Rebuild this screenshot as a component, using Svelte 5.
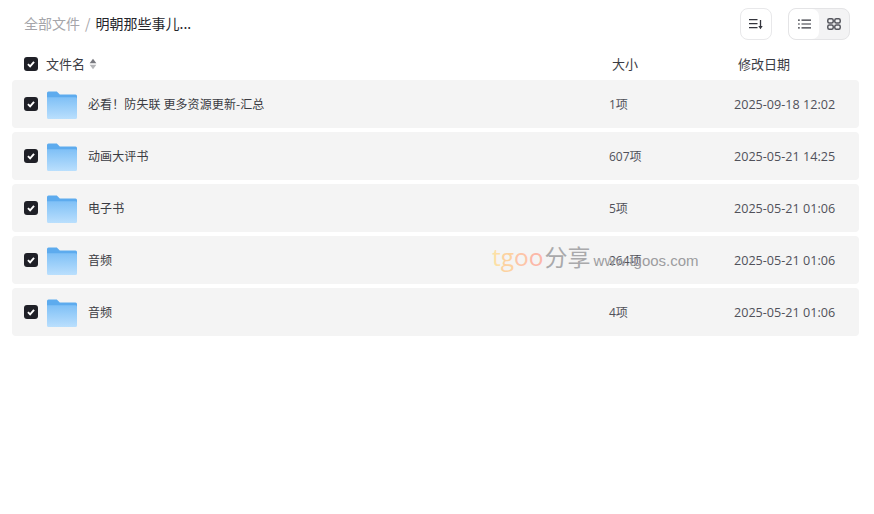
<script>
  const rows = [
    { name: "必看！防失联 更多资源更新-汇总", size: "1项", date: "2025-09-18 12:02" },
    { name: "动画大评书", size: "607项", date: "2025-05-21 14:25" },
    { name: "电子书", size: "5项", date: "2025-05-21 01:06" },
    { name: "音频", size: "264项", date: "2025-05-21 01:06" },
    { name: "音频", size: "4项", date: "2025-05-21 01:06" },
  ];
</script>

{#snippet check()}
  <span class="check">
    <svg width="8" height="8" viewBox="0 0 10 10"><path d="M1.2 5.2 3.9 8 8.8 2.2" fill="none" stroke="#fff" stroke-width="2.4" /></svg>
  </span>
{/snippet}

<div class="page">
  <header class="top">
    <nav class="crumbs">
      <span class="root">全部文件</span>
      <span class="sep">/</span>
      <span class="current">明朝那些事儿...</span>
    </nav>
    <div class="tools">
      <button class="tool-btn" aria-label="排序">
        <svg width="14" height="12" viewBox="0 0 14 12" fill="none" stroke="#33343c" stroke-width="1.3">
          <path d="M0 1.7H8.5M0 5.7H8.5M0 9.7H8.5" />
          <path d="M11.5 2V9" />
          <path d="M9.3 8 11.5 11.2 13.7 8Z" fill="#33343c" stroke="none" />
        </svg>
      </button>
      <div class="view-group">
        <button class="view-btn active" aria-label="列表">
          <svg width="13" height="10" viewBox="0 0 13 10" fill="none" stroke="#33343c" stroke-width="1.2">
            <path d="M0 1.2H1.8M0 5H1.8M0 8.8H1.8M3.5 1.2H13M3.5 5H13M3.5 8.8H13" />
          </svg>
        </button>
        <button class="view-btn" aria-label="网格">
          <svg width="14" height="12" viewBox="0 0 14 12" fill="none" stroke="#55565d" stroke-width="1.5">
            <rect x="0.8" y="0.8" width="5.4" height="4.2" rx="1.5" />
            <rect x="7.8" y="0.8" width="5.4" height="4.2" rx="1.5" />
            <rect x="0.8" y="7" width="5.4" height="4.2" rx="1.5" />
            <rect x="7.8" y="7" width="5.4" height="4.2" rx="1.5" />
          </svg>
        </button>
      </div>
    </div>
  </header>

  <div class="table-head">
    <div class="head-name">
      {@render check()}
      <span class="label">文件名</span>
      <svg class="sort" width="8" height="12" viewBox="0 0 8 12">
        <path d="M4 .8 7.4 5.2H.6Z" fill="#77787e" />
        <path d="M4 11.2 7.4 6.8H.6Z" fill="#b4b5b8" />
      </svg>
    </div>
    <div class="head-size label">大小</div>
    <div class="head-date label">修改日期</div>
  </div>

  <div class="list">
    {#each rows as row}
      <div class="row">
        {@render check()}
        <svg class="folder" width="30" height="28" viewBox="0 0 30 28">
          <defs>
            <linearGradient id="folder-front" x1="0" y1="0" x2="0" y2="1">
              <stop offset="0" stop-color="#7fc0f6" />
              <stop offset="1" stop-color="#badffd" />
            </linearGradient>
          </defs>
          <path d="M0 2a1.5 1.5 0 0 1 1.5-1.5h8.3l3 3H28.5A1.5 1.5 0 0 1 30 5v4H0Z" fill="#5dabee" />
          <path d="M0 6.2h28.5A1.5 1.5 0 0 1 30 7.7V26.500a1.500 1.500 0 0 1-1.500 1.500H1.500A1.500 1.500 0 0 1 0 26.500Z" fill="url(#folder-front)" />
          <rect x="22" y="9" width="4" height="2" rx="1" fill="#8cc5f5" />
        </svg>
        <span class="name">{row.name}</span>
        <span class="size">{row.size}</span>
        <span class="date">{row.date}</span>
      </div>
    {/each}
  </div>

  <div class="watermark">
    <span class="wm-t">t</span><span class="wm-g">g</span><span class="wm-o1">o</span><span class="wm-o2">o</span><span class="wm-cn">分享</span>
    <span class="wm-url">www.tgoos.com</span>
  </div>
</div>

<style>
  :global(body) {
    margin: 0;
    background: #fff;
  }

  .page {
    position: relative;
    width: 874px;
    height: 514px;
    overflow: hidden;
    font-family: "Noto Sans CJK SC", "Open Sans", sans-serif;
    color: #26272e;
  }

  /* header */
  .top {
    display: flex;
    align-items: center;
    justify-content: space-between;
    height: 48px;
    padding: 0 24px;
    box-sizing: border-box;
  }
  .crumbs {
    display: flex;
    align-items: center;
    font-size: 14px;
    padding-bottom: 2px;
  }
  .root { color: #a5a5aa; }
  .sep {
    margin: 0 5px;
    color: #a5a5aa;
    font-size: 14px;
  }
  .current { color: #25262c; }

  .tools {
    display: flex;
    gap: 16px;
  }
  button {
    display: flex;
    align-items: center;
    justify-content: center;
    padding: 0;
    border: 0;
    background: none;
  }
  .tool-btn {
    width: 32px;
    height: 32px;
    border: 1px solid #e8e8ea;
    border-radius: 8px;
    background: #fff;
  }
  .view-group {
    display: flex;
    width: 62px;
    height: 32px;
    box-sizing: border-box;
    border: 1px solid #e4e4e6;
    border-radius: 8px;
    background: #f3f3f4;
    overflow: hidden;
  }
  .view-btn {
    flex: 1;
  }
  .view-btn.active {
    background: #fff;
    border-radius: 7px;
  }

  /* table head */
  .table-head {
    display: flex;
    align-items: center;
    height: 32px;
    padding-left: 24px;
    font-size: 13px;
    color: #3b3c44;
  }
  .label {
    padding-bottom: 2px;
  }
  .head-name {
    display: flex;
    align-items: center;
    width: 588px;
  }
  .head-name .label {
    margin-left: 8px;
  }
  .sort {
    margin-left: 4px;
  }
  .head-size { width: 126px; }

  /* rows */
  .list {
    display: flex;
    flex-direction: column;
    gap: 4px;
    padding: 0 15px 0 12px;
  }
  .row {
    display: flex;
    align-items: center;
    height: 48px;
    padding-left: 12px;
    background: #f4f4f4;
    border-radius: 4px;
    font-size: 12px;
    color: #3a3b42;
  }
  .folder {
    margin-left: 9px;
    margin-top: 1px;
    flex: none;
  }
  .name {
    width: 521px;
    margin-left: 11px;
    padding-bottom: 2px;
    letter-spacing: 0.1px;
    box-sizing: border-box;
  }
  .size {
    width: 125px;
    font-family: "Open Sans", "Noto Sans CJK SC", sans-serif;
    color: #50515a;
  }
  .date {
    font-family: "Open Sans", sans-serif;
    font-size: 12.6px;
    color: #50515a;
  }

  .check {
    display: inline-flex;
    align-items: center;
    justify-content: center;
    flex: none;
    width: 14px;
    height: 14px;
    background: #1f2027;
    border-radius: 3px;
  }

  /* watermark */
  .watermark {
    position: absolute;
    left: 492px;
    top: 240px;
    display: flex;
    align-items: baseline;
    white-space: nowrap;
    font-family: "Open Sans", "Noto Sans CJK SC", sans-serif;
    font-size: 24.5px;
    line-height: 32px;
    pointer-events: none;
  }
  .wm-t { color: #fde0a6; }
  .wm-g { color: #fdd2a0; }
  .wm-o1 { color: #fdc5a8; }
  .wm-o2 { color: #fcb8a8; }
  .wm-cn {
    color: #a9a9ab;
    font-family: "Noto Sans CJK SC", sans-serif;
    font-size: 23px;
    margin-left: 1px;
  }
  .wm-url {
    margin-left: 3px;
    color: #9c9c9f;
    font-family: "Liberation Sans", sans-serif;
    font-size: 15px;
  }
</style>
